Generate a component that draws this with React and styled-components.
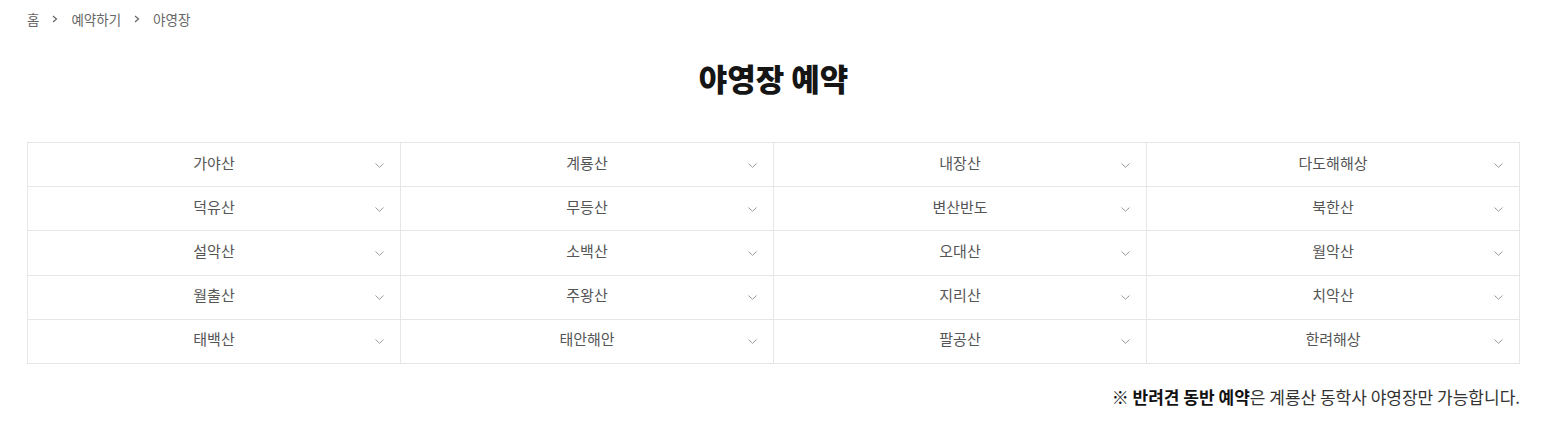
import React from "react";
import styled, { createGlobalStyle } from "styled-components";

const Global = createGlobalStyle`
  html, body { margin: 0; padding: 0; background: #fff; }
  body { font-family: "Noto Sans CJK KR", "Noto Sans", sans-serif; color: #333; }
`;

const Page = styled.div`
  padding: 0 29px 0 27px;
`;

const Breadcrumb = styled.nav`
  display: flex;
  align-items: center;
  gap: 13px;
  height: 38px;
  font-size: 13.5px;
  color: #666;
`;

const Sep = styled.svg`
  width: 6px;
  height: 8px;
  color: #666;
`;

const Title = styled.h2`
  margin: 0;
  padding: 20px 0 0;
  height: 84px;
  box-sizing: border-box;
  text-align: center;
  font-size: 31px;
  font-weight: 900;
  color: #151515;
  line-height: 40px;
`;

const Grid = styled.div`
  margin-top: 20px;
  display: grid;
  grid-template-columns: repeat(4, 1fr);
  border-top: 1px solid #e6e6e6;
  border-left: 1px solid #e6e6e6;
`;

const Cell = styled.button`
  position: relative;
  display: flex;
  align-items: center;
  justify-content: center;
  height: 44.2px;
  box-sizing: border-box;
  border: 0;
  border-right: 1px solid #e6e6e6;
  border-bottom: 1px solid #e6e6e6;
  background: #fff;
  font-family: inherit;
  font-size: 15px;
  line-height: 20px;
  color: #555;
  padding: 0 16px 4px;
  cursor: pointer;
`;

const Chevron = styled.svg`
  position: absolute;
  right: 16px;
  top: 50%;
  margin-top: -2px;
  width: 9px;
  height: 5px;
`;

const Note = styled.p`
  margin: 20px 0 0;
  text-align: right;
  font-size: 17px;
  color: #333;
`;

const Strong = styled.strong`
  font-weight: 700;
  color: #111;
`;

const names = [
  "가야산", "계룡산", "내장산", "다도해해상",
  "덕유산", "무등산", "변산반도", "북한산",
  "설악산", "소백산", "오대산", "월악산",
  "월출산", "주왕산", "지리산", "치악산",
  "태백산", "태안해안", "팔공산", "한려해상",
];

const Arrow = () => (
  <Sep viewBox="0 0 6 8" fill="none">
    <path d="M1 1l3.5 3L1 7" stroke="currentColor" strokeWidth="1.2" />
  </Sep>
);

export default function App() {
  return (
    <>
      <Global />
      <Page>
        <Breadcrumb>
          <span>홈</span>
          <Arrow />
          <span>예약하기</span>
          <Arrow />
          <span>야영장</span>
        </Breadcrumb>
        <Title>야영장 예약</Title>
        <Grid>
          {names.map((n) => (
            <Cell key={n}>
              {n}
              <Chevron viewBox="0 0 9 5" fill="none">
                <path d="M0.5 0.5L4.5 4.3L8.5 0.5" stroke="#9a9a9a" strokeWidth="1" />
              </Chevron>
            </Cell>
          ))}
        </Grid>
        <Note>
          <Strong>※ 반려견 동반 예약</Strong>은 계룡산 동학사 야영장만 가능합니다.
        </Note>
      </Page>
    </>
  );
}
